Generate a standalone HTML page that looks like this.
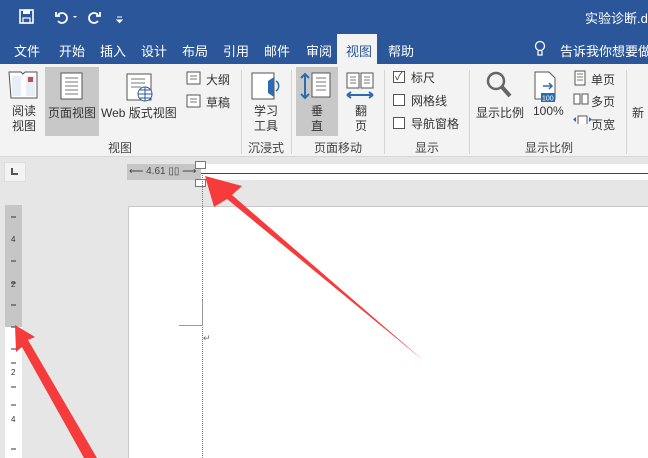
<!DOCTYPE html><html><head><meta charset="utf-8"><style>
*{margin:0;padding:0;box-sizing:border-box}
body{width:648px;height:458px;overflow:hidden;position:relative;background:#e6e6e6;font-family:"Liberation Sans","Noto Sans CJK SC",sans-serif;}
.a{position:absolute;white-space:nowrap}
.t{font-size:13px;color:#fff;top:41px}
.r{font-size:12px;color:#333}
.g{font-size:12px;color:#444;top:139px}
.sep{position:absolute;top:70px;width:1px;height:84px;background:#d4d4d4}
.cb{position:absolute;width:12px;height:12px;border:1px solid #555;background:#fff}
</style></head><body>
<div class="a" style="left:0;top:0;width:648px;height:64px;background:#2b579a"></div>
<svg class="a" style="left:18px;top:8px" width="110" height="18" viewBox="0 0 110 18">
<rect x="2" y="2" width="13" height="13" fill="none" stroke="#fff" stroke-width="1.6"/><rect x="5" y="2" width="7" height="4" fill="#fff"/><rect x="5" y="10" width="7" height="5" fill="none" stroke="#fff" stroke-width="1.2"/>
<path d="M40 7 a5 5 0 1 1 0 6 M38 4 v4 h4" fill="none" stroke="#fff" stroke-width="1.8"/><path d="M55 8 l2 2 l2-2z" fill="#fff"/>
<path d="M80 7 a5 5 0 1 0 0 6 M82 4 v4 h-4" fill="none" stroke="#fff" stroke-width="1.8"/>
<path d="M99 9 h5 M99 12 l2.5 2.5 l2.5-2.5z" fill="#fff" stroke="#fff" stroke-width="1"/></svg>
<div class="a" style="left:585px;top:8px;font-size:13px;color:#fff">实验诊断.do</div>
<div class="a" style="left:337px;top:34px;width:40px;height:31px;background:#f3f3f3"></div>
<div class="a t" style="left:14px">文件</div><div class="a t" style="left:59px">开始</div><div class="a t" style="left:100px">插入</div><div class="a t" style="left:141px">设计</div><div class="a t" style="left:182px">布局</div><div class="a t" style="left:223px">引用</div><div class="a t" style="left:264px">邮件</div><div class="a t" style="left:306px">审阅</div><div class="a t" style="left:346px;color:#2b579a">视图</div><div class="a t" style="left:388px">帮助</div>
<svg class="a" style="left:534px;top:40px" width="12" height="18"><circle cx="6" cy="6" r="4.5" fill="none" stroke="#fff" stroke-width="1.3"/><path d="M4 11v4h4v-4" fill="none" stroke="#fff" stroke-width="1.3"/></svg>
<div class="a t" style="left:560px">告诉我你想要做什</div>
<div class="a" style="left:0;top:64px;width:648px;height:93px;background:#f3f3f3;border-bottom:1px solid #d6d6d6"></div>
<div class="a" style="left:45px;top:67px;width:54px;height:69px;background:#c8c8c8"></div>
<div class="a" style="left:296px;top:67px;width:42px;height:69px;background:#c8c8c8"></div>
<svg class="a" style="left:0;top:64px" width="648" height="60">
<g fill="#fff" stroke="#555"><path d="M9 8h12l2 2 2-2h12v26h-26z"/><rect x="61" y="9" width="21" height="26"/><rect x="127" y="10" width="24" height="26"/><rect x="187" y="8" width="13" height="12"/><rect x="187" y="31" width="13" height="12"/><rect x="252" y="9" width="22" height="26"/><rect x="312" y="9" width="18" height="24"/><rect x="347" y="9" width="12" height="15"/><rect x="361" y="9" width="12" height="15"/><path d="M535 8h14l6 6v21h-20z"/><rect x="575" y="7" width="10" height="14"/><rect x="574" y="30" width="6" height="10"/><rect x="582" y="30" width="6" height="10"/><rect x="578" y="52" width="9" height="10"/></g>
<path d="M12 12h9v20h-9zM26 12h9v20h-9z" fill="#e8eef6"/><rect x="28" y="13" width="5" height="5" fill="#c0504d"/>
<g stroke="#777" stroke-width="1"><path d="M65 14h13M65 18h13M65 22h13M65 26h13M65 30h13M131 15h14M131 19h14M131 23h10M316 14h10M316 18h10M316 22h10M316 26h10M350 13h6M350 16h6M350 19h6M364 13h6M364 16h6M364 19h6M190 12h7M190 15h7M190 35h7M190 38h7M577 10h6M577 13h6M577 16h6"/></g>
<circle cx="145" cy="30" r="7" fill="#fff" stroke="#2b579a"/><path d="M145 23v14M138 30h14M140 26h10M140 34h10" stroke="#2b579a"/>
<path d="M268 17l6-4v20l-6-4z" fill="#2b6cb0"/><path d="M276 17a6 6 0 0 1 0 10" stroke="#2b6cb0" fill="none" stroke-width="1.5"/>
<path d="M305 10v24M301 14l4-4 4 4M301 30l4 4 4-4" stroke="#2b6cb0" stroke-width="2" fill="none"/>
<path d="M347 31h26M347 31l4-3M347 31l4 3M373 31l-4-3M373 31l-4 3" stroke="#2b6cb0" stroke-width="2" fill="none"/>
<circle cx="496" cy="17" r="8" fill="none" stroke="#666" stroke-width="2.5"/><path d="M502 23l8 9" stroke="#666" stroke-width="4"/>
<rect x="541" y="29" width="14" height="9" fill="#2b6cb0"/><text x="542" y="36.5" font-size="7" fill="#fff" font-family="Liberation Sans">100</text><path d="M543 22h9M549 19l3 3-3 3" stroke="#2b6cb0" fill="none" stroke-width="1.5"/>
<path d="M576 58l-3-2.5 3-2.5M589 58l3-2.5-3-2.5" fill="#2b6cb0"/>
</svg>
<div class="a r" style="left:12px;top:104px;line-height:15px;text-align:center">阅读<br>视图</div>
<div class="a r" style="left:48px;top:104px">页面视图</div>
<div class="a r" style="left:101px;top:104px">Web 版式视图</div>
<div class="a r" style="left:206px;top:71px">大纲</div><div class="a r" style="left:206px;top:94px">草稿</div>
<div class="a r" style="left:254px;top:104px;line-height:15px">学习<br>工具</div>
<div class="a r" style="left:311px;top:104px;line-height:15px">垂<br>直</div>
<div class="a r" style="left:355px;top:104px;line-height:15px">翻<br>页</div>
<div class="cb" style="left:393px;top:71px"></div><div class="a" style="left:395px;top:68px;font-size:11px;color:#444">✓</div>
<div class="cb" style="left:393px;top:94px"></div><div class="cb" style="left:393px;top:117px"></div>
<div class="a r" style="left:411px;top:69px">标尺</div><div class="a r" style="left:411px;top:92px">网格线</div><div class="a r" style="left:411px;top:115px">导航窗格</div>
<div class="a r" style="left:476px;top:104px">显示比例</div><div class="a r" style="left:533px;top:104px">100%</div>
<div class="a r" style="left:591px;top:71px">单页</div><div class="a r" style="left:591px;top:93px">多页</div><div class="a r" style="left:591px;top:116px">页宽</div>
<div class="a r" style="left:632px;top:104px">新</div>
<div class="a g" style="left:108px">视图</div><div class="a g" style="left:248px">沉浸式</div><div class="a g" style="left:314px">页面移动</div><div class="a g" style="left:415px">显示</div><div class="a g" style="left:525px">显示比例</div>
<div class="sep" style="left:241px"></div><div class="sep" style="left:291px"></div><div class="sep" style="left:384px"></div><div class="sep" style="left:469px"></div><div class="sep" style="left:626px"></div>
<div class="a" style="left:4px;top:162px;width:22px;height:20px;background:#f3f3f3;border:1px solid #ddd"></div>
<div class="a" style="left:11px;top:168px;width:7px;height:7px;border-left:2px solid #555;border-bottom:2px solid #555"></div>
<div class="a" style="left:127px;top:164px;width:74px;height:16px;background:#c6c6c6"></div>
<div class="a" style="left:201px;top:164px;width:447px;height:16px;background:#fff"></div>
<div class="a" style="left:201px;top:173px;width:447px;height:1px;background:#444"></div>
<div class="a" style="left:129px;top:166px;font-size:10px;color:#444">⟵ 4.61 ▯▯ ⟶</div>
<div class="a" style="left:195px;top:161px;width:11px;height:8px;background:#fff;border:1px solid #777"></div>
<div class="a" style="left:195px;top:179px;width:11px;height:8px;background:#fff;border:1px solid #777"></div>
<div class="a" style="left:5px;top:205px;width:17px;height:253px;background:#fff"></div>
<div class="a" style="left:5px;top:205px;width:17px;height:122px;background:#c6c6c6"></div>
<div class="a" style="left:128px;top:206px;width:520px;height:252px;background:#fff;border-left:1px solid #c8c8c8;border-top:1px solid #c8c8c8"></div>
<div class="a" style="left:202px;top:175px;height:283px;border-left:1px dotted #777"></div>
<div class="a" style="left:179px;top:325px;width:24px;height:1px;background:#999"></div>
<div class="a" style="left:202px;top:300px;width:1px;height:25px;background:#999"></div>
<div class="a" style="left:203px;top:333px;font-size:9px;color:#666">↵</div>
<svg class="a" style="left:5px;top:205px" width="17" height="253"><g stroke="#333" stroke-width="1"><path d="M6 12h5M6 56h5M6 78h5M6 100h5M6 122h5M6 144h5M6 158h5M6 182h5M6 200h5M6 244h5"/></g>
<g font-size="8" fill="#333" font-family="Liberation Sans"><text x="6" y="37">4</text><text x="6" y="82">2</text><text x="6" y="170">2</text><text x="6" y="217">4</text></g></svg>
<svg class="a" style="left:0;top:0" width="648" height="458"><path d="M205 176 L242 186 L232 195 L424 361 L227 199 L214 207Z" fill="#f53b3b"/><path d="M15 325 L35 337 L28 340 L97 458 L84 458 L22 347 L16 352Z" fill="#f53b3b"/></svg>
</body></html>
